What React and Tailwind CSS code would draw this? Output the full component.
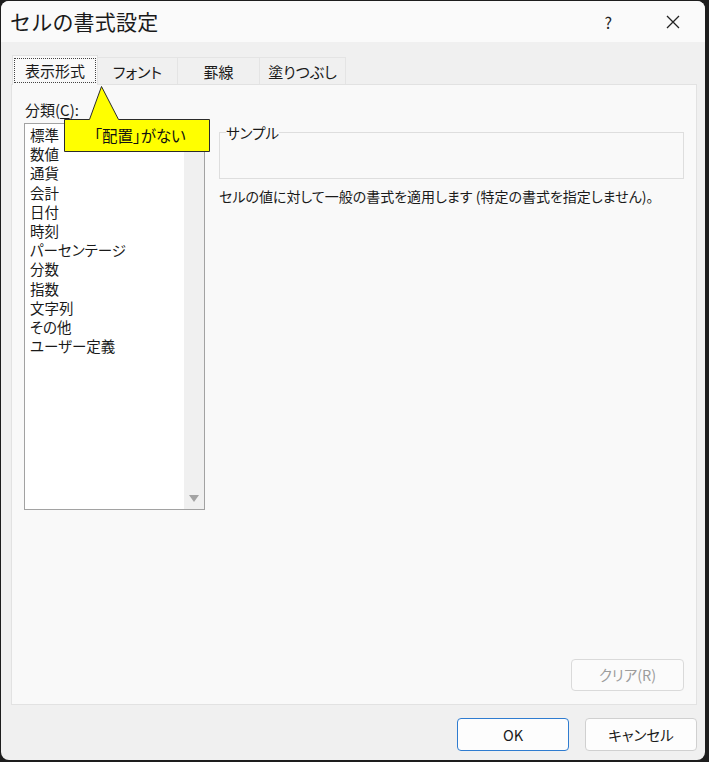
import { useState } from "react";

const categories = [
  "標準",
  "数値",
  "通貨",
  "会計",
  "日付",
  "時刻",
  "パーセンテージ",
  "分数",
  "指数",
  "文字列",
  "その他",
  "ユーザー定義",
];

const tabs = [
  { id: "number", label: "表示形式", w: "w-[86px]" },
  { id: "font", label: "フォント", w: "w-[80px]" },
  { id: "border", label: "罫線", w: "w-[82px]" },
  { id: "fill", label: "塗りつぶし", w: "w-[86px]" },
];

function Callout() {
  return (
    <div className="absolute left-[51px] top-0 h-[68px] w-[148px]">
      <svg width="148" height="68" viewBox="0 0 148 68" className="absolute inset-0">
        <path
          d="M1.5 34.5 L26.5 34.5 L38.5 1.5 L55.5 34.5 L146.5 34.5 L146.5 66.5 L1.5 66.5 Z"
          fill="#ffff00"
          stroke="#2b2b2b"
          strokeWidth="1"
        />
      </svg>
      <div className="absolute left-0 right-0 top-[35px] flex h-[31px] items-center justify-center pl-[6px] text-[15.5px] leading-none text-[#111]">
        「配置」がない
      </div>
    </div>
  );
}

export default function App() {
  const [tab, setTab] = useState("number");

  return (
    <div className="h-[762px] w-[709px] bg-[#1d1d1d] pb-[2px] pl-px pr-[4px] pt-px font-['Noto_Sans_CJK_JP','Noto_Sans',sans-serif] text-[#1a1a1a]">
      <div className="flex h-full flex-col overflow-hidden rounded-[8px] bg-[#f0f0f0]">
        {/* title bar */}
        <div className="flex h-[41px] shrink-0 items-center bg-[#fafafa] pl-[9px]">
          <span className="text-[21px] leading-none tracking-[0.2px]">セルの書式設定</span>
          <span className="ml-auto mr-[54px] text-[16px] leading-none text-[#222]">?</span>
          <svg width="14" height="14" viewBox="0 0 14 14" className="mr-[25px]">
            <path d="M1 1 L13 13 M13 1 L1 13" stroke="#222" strokeWidth="1.3" />
          </svg>
        </div>

        <div className="flex flex-1 flex-col px-[10px] pr-[8px] pt-[13px] [font-feature-settings:'palt']">
          {/* tabs */}
          <div className="flex h-[29px] items-end pl-[1px]">
            {tabs.map((t) => {
              const active = tab === t.id;
              return (
                <button
                  key={t.id}
                  onClick={() => setTab(t.id)}
                  className={`${t.w} flex items-center justify-center text-[15px] leading-none ${
                    active
                      ? "relative z-10 -mb-px h-[30px] border border-b-0 border-[#e2e2e2] bg-[#f9f9f9]"
                      : "h-[27px] border-r border-t border-[#e4e4e4] bg-[#f0f0f0]"
                  }`}
                >
                  {active ? (
                    <span className="flex h-[25px] w-[82px] items-center justify-center border border-dotted border-[#444]">
                      {t.label}
                    </span>
                  ) : (
                    t.label
                  )}
                </button>
              );
            })}
          </div>

          {/* tab page */}
          <div className="relative flex h-[621px] flex-col border border-[#e2e2e2] bg-[#f9f9f9] pb-[13px] pl-[12px] pr-[12px] pt-[16px]">
            <div className="flex gap-[14px]">
              <div className="flex w-[181px] flex-col">
                <div className="h-[22px] pl-px text-[15px] leading-[17px]">
                  分類(<span className="underline underline-offset-2">C</span>):
                </div>
                <div className="flex h-[387px] border border-[#a2a2a2] bg-white">
                  <ul className="flex-1 pl-[5px] pt-[1px] text-[14.5px] leading-[19.2px]">
                    {categories.map((c) => (
                      <li key={c}>{c}</li>
                    ))}
                  </ul>
                  <div className="flex w-[20px] flex-col items-center justify-end bg-[#f0f0f0] pb-[7px]">
                    <svg width="10" height="7" viewBox="0 0 10 7">
                      <path d="M0 0 L10 0 L5 7 Z" fill="#a3a3a3" />
                    </svg>
                  </div>
                </div>
              </div>

              <div className="flex w-[465px] flex-col pt-[23px]">
                <fieldset className="h-[55px] border border-[#dedede] px-[6px]">
                  <legend className="text-[14.5px] leading-[17px]">サンプル</legend>
                </fieldset>
                <p className="mt-[9px] whitespace-nowrap text-[14px] leading-[17px]">
                  セルの値に対して一般の書式を適用します (特定の書式を指定しません)。
                </p>
              </div>
            </div>

            <div className="mt-auto flex justify-end">
              <button className="h-[32px] w-[113px] rounded-[4px] border border-[#dadada] bg-[#fbfbfb] text-[14.5px] text-[#9d9d9d]">
                クリア(R)
              </button>
            </div>

            <Callout />
          </div>

          {/* dialog buttons */}
          <div className="mt-[13px] flex justify-end gap-[16px]">
            <button className="h-[33px] w-[112px] rounded-[4px] border border-[#2f7cd0] bg-[#fdfdfd] text-[14.5px]">
              OK
            </button>
            <button className="h-[33px] w-[112px] rounded-[4px] border border-[#d0d0d0] bg-[#fdfdfd] text-[14.5px]">
              キャンセル
            </button>
          </div>
        </div>
      </div>
    </div>
  );
}
